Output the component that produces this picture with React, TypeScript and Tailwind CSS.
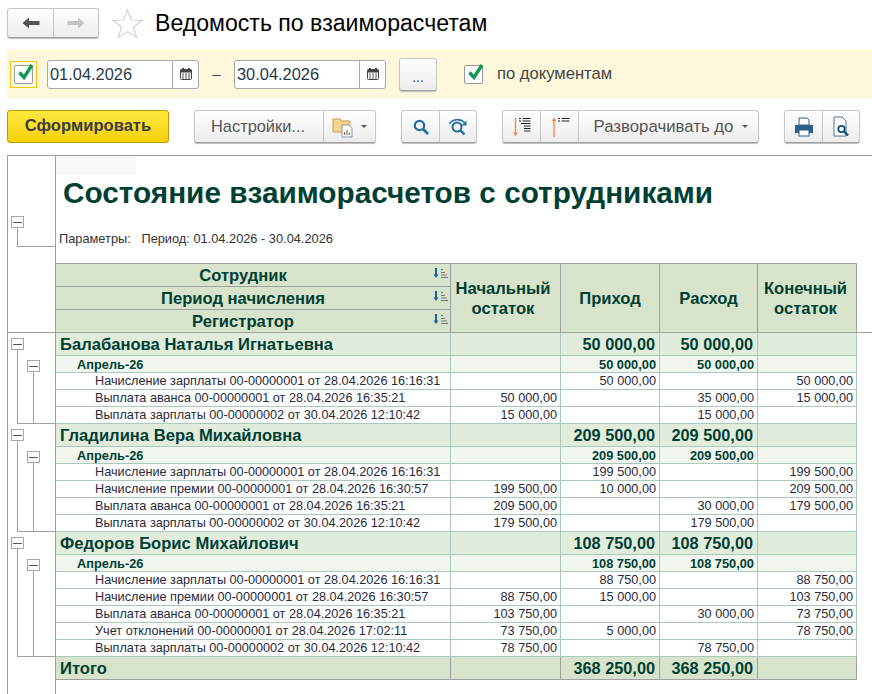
const font = { fontFamily: '"Liberation Sans", Arial, sans-serif' };

type Row = [string, string, string, string, string];
type Group = { name: string; income: string; outcome: string; sub: [string, string]; rows: Row[] };

const groups: Group[] = [
  {
    name: "Балабанова Наталья Игнатьевна",
    income: "50 000,00",
    outcome: "50 000,00",
    sub: ["50 000,00", "50 000,00"],
    rows: [
      ["Начисление зарплаты 00-00000001 от 28.04.2026 16:16:31", "", "50 000,00", "", "50 000,00"],
      ["Выплата аванса 00-00000001 от 28.04.2026 16:35:21", "50 000,00", "", "35 000,00", "15 000,00"],
      ["Выплата зарплаты 00-00000002 от 30.04.2026 12:10:42", "15 000,00", "", "15 000,00", ""],
    ],
  },
  {
    name: "Гладилина Вера Михайловна",
    income: "209 500,00",
    outcome: "209 500,00",
    sub: ["209 500,00", "209 500,00"],
    rows: [
      ["Начисление зарплаты 00-00000001 от 28.04.2026 16:16:31", "", "199 500,00", "", "199 500,00"],
      ["Начисление премии 00-00000001 от 28.04.2026 16:30:57", "199 500,00", "10 000,00", "", "209 500,00"],
      ["Выплата аванса 00-00000001 от 28.04.2026 16:35:21", "209 500,00", "", "30 000,00", "179 500,00"],
      ["Выплата зарплаты 00-00000002 от 30.04.2026 12:10:42", "179 500,00", "", "179 500,00", ""],
    ],
  },
  {
    name: "Федоров Борис Михайлович",
    income: "108 750,00",
    outcome: "108 750,00",
    sub: ["108 750,00", "108 750,00"],
    rows: [
      ["Начисление зарплаты 00-00000001 от 28.04.2026 16:16:31", "", "88 750,00", "", "88 750,00"],
      ["Начисление премии 00-00000001 от 28.04.2026 16:30:57", "88 750,00", "15 000,00", "", "103 750,00"],
      ["Выплата аванса 00-00000001 от 28.04.2026 16:35:21", "103 750,00", "", "30 000,00", "73 750,00"],
      ["Учет отклонений 00-00000001 от 28.04.2026 17:02:11", "73 750,00", "5 000,00", "", "78 750,00"],
      ["Выплата зарплаты 00-00000002 от 30.04.2026 12:10:42", "78 750,00", "", "78 750,00", ""],
    ],
  },
];

const cols = "grid grid-cols-[395px_110px_99px_98px_99px] w-[801px]";

function Calendar() {
  return (
    <svg width="14" height="14" viewBox="0 0 14 14">
      <rect x="1.5" y="2.5" width="11" height="10" rx="1" fill="#fff" stroke="#444" />
      <rect x="1.5" y="2.5" width="11" height="3" fill="#444" />
      <rect x="3" y="1" width="2" height="3" fill="#444" />
      <rect x="9" y="1" width="2" height="3" fill="#444" />
      <path d="M3 7h2M6 7h2M9 7h2M3 9h2M6 9h2M9 9h2M3 11h2M6 11h2M9 11h2" stroke="#555" strokeWidth="1" />
    </svg>
  );
}

function Check({ className }: { className: string }) {
  return (
    <div className={`relative border border-[#9a9a9a] rounded-[2px] bg-white ${className}`}>
      <svg className="absolute left-[1px] top-[-4px]" width="20" height="20" viewBox="0 0 20 20">
        <path d="M3.5 10.5 L8 15.5 L16 3" fill="none" stroke="#0e9a50" strokeWidth="3.4" />
      </svg>
    </div>
  );
}

function DateField({ value }: { value: string }) {
  return (
    <div className="flex w-[152px] h-[29px] rounded-[3px] border border-[#a8a8a8] bg-white">
      <div className="flex-1 pl-[2px] text-[16.4px] leading-[26px] text-[#1f3a4d]">{value}</div>
      <div className="flex w-[26px] items-center justify-center border-l border-[#a8a8a8]">
        <Calendar />
      </div>
    </div>
  );
}

function Btn({ className = "", children }: { className?: string; children: React.ReactNode }) {
  return (
    <div
      className={`flex h-[33px] rounded-[3px] border border-[#c8c8c8] border-b-[#a0a0a0] bg-gradient-to-b from-white to-[#ececec] shadow-[0_1px_1px_#bbb] ${className}`}
    >
      {children}
    </div>
  );
}

function Seg({ className = "", children }: { className?: string; children: React.ReactNode }) {
  return <div className={`flex items-center justify-center border-r border-[#c4c4c4] last:border-r-0 ${className}`}>{children}</div>;
}

function Caret() {
  return <div className="h-0 w-0 border-x-[3px] border-t-[3px] border-x-transparent border-t-[#555]" />;
}

function Loupe({ color = "#1f6ea6" }: { color?: string }) {
  return (
    <svg width="18" height="18" viewBox="0 0 18 18">
      <circle cx="7.5" cy="7.5" r="4.7" fill="none" stroke={color} strokeWidth="2.2" />
      <path d="M11 11 L16 16" stroke={color} strokeWidth="2.6" />
    </svg>
  );
}

function SortIcon() {
  return (
    <svg width="16" height="11" viewBox="0 0 16 11">
      <path d="M3 0v7" stroke="#1a62a0" strokeWidth="2" />
      <path d="M0.5 6.5h5L3 10z" fill="#1a62a0" />
      <path d="M8 1.5h2M8 4.5h4M8 7h6M8 9.5h7" stroke="#777" strokeWidth="1" />
    </svg>
  );
}

function TreeBox({ className }: { className: string }) {
  return (
    <div className={`absolute flex h-[12px] w-[13px] items-center justify-center border border-[#a6a6a6] bg-white ${className}`}>
      <div className="h-[1px] w-[9px] bg-[#555]" />
    </div>
  );
}

function Num({ children, className = "" }: { children?: React.ReactNode; className?: string }) {
  return <div className={`border-r border-[#a9c9bd] pr-[3px] text-right ${className}`}>{children}</div>;
}

function Employee({ g }: { g: Group }) {
  return (
    <div className="flex h-fit">
      <div className="relative w-[48px] shrink-0 border-r border-[#a0a0a0]">
        <TreeBox className="left-[3px] top-[5px]" />
        <TreeBox className="left-[19px] top-[27px]" />
        <div className="absolute left-[9px] top-[17px] bottom-0 w-[1px] bg-[#a0a0a0]" />
        <div className="absolute left-[25px] top-[39px] bottom-0 w-[1px] bg-[#a0a0a0]" />
        <div className="absolute bottom-0 left-[9px] right-0 h-[1px] bg-[#a0a0a0]" />
      </div>
      <div className="w-[801px]">
        <div className={`${cols} h-[23px] border-b border-[#a9c9bd] bg-[#e2ecdd] font-bold leading-[23px] text-[#003f33]`}>
          <div className="border-r border-[#a9c9bd] pl-[4px] text-[16.6px] whitespace-nowrap">{g.name}</div>
          <Num />
          <Num className="pr-[4px] text-[16.3px]">{g.income}</Num>
          <Num className="pr-[4px] text-[16.3px]">{g.outcome}</Num>
          <Num />
        </div>
        <div className={`${cols} h-[17px] border-b border-[#a9c9bd] bg-[#f0f5ee] text-[12.8px] font-bold leading-[17px] text-[#003f33]`}>
          <div className="border-r border-[#a9c9bd] pl-[21px]">Апрель-26</div>
          <Num />
          <Num>{g.sub[0]}</Num>
          <Num>{g.sub[1]}</Num>
          <Num />
        </div>
        {g.rows.map((r) => (
          <div key={r[0]} className={`${cols} h-[17px] border-b border-[#a9c9bd] text-[12.7px] leading-[16px] text-[#2a2a3c]`}>
            <div className="border-r border-[#a9c9bd] pl-[39px] whitespace-nowrap">{r[0]}</div>
            <Num>{r[1]}</Num>
            <Num>{r[2]}</Num>
            <Num>{r[3]}</Num>
            <Num>{r[4]}</Num>
          </div>
        ))}
      </div>
    </div>
  );
}

function HeadCell({ children, className = "" }: { children: React.ReactNode; className?: string }) {
  return (
    <div className={`flex items-center justify-center border-r border-[#a0a0a0] pt-[2px] text-center leading-[20px] ${className}`}>{children}</div>
  );
}

export default function App() {
  return (
    <div style={font} className="flex h-[694px] w-[872px] flex-col overflow-hidden bg-white">
      <div className="ml-[7px] mt-[8px] flex h-[30px] items-center">
        <div className="flex h-[30px] w-[92px] rounded-[3px] border border-[#c8c8c8] border-b-[#a0a0a0] bg-gradient-to-b from-white to-[#ececec] shadow-[0_1px_1px_#bbb]">
          <div className="flex w-[46px] items-center justify-center border-r border-[#c8c8c8]">
            <svg width="20" height="14" viewBox="0 0 20 14">
              <path d="M1.5 7 L8 1.5 V5 H18.5 V9 H8 V12.5 Z" fill="#555" />
            </svg>
          </div>
          <div className="flex flex-1 items-center justify-center">
            <svg width="20" height="14" viewBox="0 0 20 14">
              <path d="M18.5 7 L12 1.5 V5 H1.5 V9 H12 V12.5 Z" fill="#c4c4c4" />
            </svg>
          </div>
        </div>
        <svg className="ml-[13px]" width="31" height="31" viewBox="0 0 31 31">
          <path d="M15.5 2 L19.3 12 L30 12.4 L21.6 19 L24.5 29.5 L15.5 23.6 L6.5 29.5 L9.4 19 L1 12.4 L11.7 12 Z" fill="#fff" stroke="#d2d2d2" strokeWidth="1.2" />
        </svg>
        <div className="ml-[12px] whitespace-nowrap pt-[1px] text-[23.1px] text-black">Ведомость по взаиморасчетам</div>
      </div>

      <div className="ml-[7px] mt-[11px] flex h-[50px] items-center bg-[#fdf8dc]">
        <div className="ml-[3px] flex h-[27px] w-[27px] items-center justify-center border border-[#f5c518]">
          <Check className="h-[19px] w-[19px]" />
        </div>
        <div className="ml-[10px]"><DateField value="01.04.2026" /></div>
        <div className="w-[35px] text-center text-[15px] text-[#444]">–</div>
        <DateField value="30.04.2026" />
        <Btn className="ml-[13px] w-[38px] items-end justify-center pb-[5px] text-[14px] leading-[16px] text-[#444]">...</Btn>
        <Check className="ml-[27px] h-[19px] w-[19px]" />
        <div className="ml-[14px] text-[16.6px] text-[#444]">по документам</div>
      </div>

      <div className="ml-[7px] mt-[11px] flex h-[33px]">
        <div className="flex h-[33px] w-[162px] items-center justify-center rounded-[3px] border border-[#c09a00] bg-gradient-to-b from-[#ffe83c] to-[#f5d000] text-[16.6px] font-bold text-[#3c3c3c]">
          Сформировать
        </div>
        <Btn className="ml-[25px] w-[182px]">
          <Seg className="w-[129px] pr-[2px] text-[16.4px] text-[#555]">Настройки...</Seg>
          <Seg className="flex-1 gap-[7px]">
            <svg width="22" height="22" viewBox="0 0 22 22">
              <path d="M1 3h7l1.5 2H18v11H1z" fill="#f6d48a" stroke="#c9a050" />
              <path d="M10 9h7l3 3v9H10z" fill="#fff" stroke="#8a97a5" />
              <path d="M12.5 19v-3" stroke="#d0483c" strokeWidth="1.3" />
              <path d="M15 19v-5" stroke="#4aa04a" strokeWidth="1.3" />
              <path d="M17.5 19v-2" stroke="#3a78b8" strokeWidth="1.3" />
            </svg>
            <Caret />
          </Seg>
        </Btn>
        <Btn className="ml-[25px] w-[76px]">
          <Seg className="w-[38px]"><Loupe /></Seg>
          <Seg className="flex-1">
            <svg width="20" height="18" viewBox="0 0 20 18">
              <circle cx="9" cy="9" r="4.5" fill="none" stroke="#1f6ea6" strokeWidth="2" />
              <path d="M12.5 12.5 L16.5 16.5" stroke="#1f6ea6" strokeWidth="2.4" />
              <path d="M1.5 6 C4 1 12 0 16.5 4.5" fill="none" stroke="#1f6ea6" strokeWidth="1.6" />
              <path d="M18.5 2.5v5h-5z" fill="#1f6ea6" />
            </svg>
          </Seg>
        </Btn>
        <Btn className="ml-[25px] w-[257px]">
          <Seg className="w-[38px]">
            <svg width="20" height="20" viewBox="0 0 20 20">
              <path d="M3.5 1v15" stroke="#ef8a50" strokeWidth="1.4" />
              <path d="M1.2 15.5h4.6L3.5 19.5z" fill="#ef8a50" />
              <path d="M7 1.5h2M10.5 1.5h8M7 4h2M10.5 4h8M9 6.5h9.5M12 9h6.5M12 11.5h6.5M12 14h6.5" stroke="#222" strokeWidth="1" />
            </svg>
          </Seg>
          <Seg className="w-[38px]">
            <svg width="20" height="20" viewBox="0 0 20 20">
              <path d="M4 20V3" stroke="#ef8a50" strokeWidth="1.4" />
              <path d="M1.7 4h4.6L4 0.5z" fill="#ef8a50" />
              <path d="M8 1.5h2M11.5 1.5h8M8 4h2M11.5 4h8" stroke="#222" strokeWidth="1" />
            </svg>
          </Seg>
          <Seg className="flex-1 gap-[9px] pl-[5px] text-[16.8px] text-[#555]">
            Разворачивать до
            <Caret />
          </Seg>
        </Btn>
        <Btn className="ml-[25px] w-[76px]">
          <Seg className="w-[38px]">
            <svg width="20" height="20" viewBox="0 0 20 20">
              <path d="M5 1h8l2 2v5H5z" fill="#fff" stroke="#2f6088" />
              <path d="M1 8h18v8H1z" fill="#2f6088" />
              <rect x="5" y="13" width="10" height="6" fill="#fff" stroke="#2f6088" />
            </svg>
          </Seg>
          <Seg className="flex-1">
            <svg width="20" height="22" viewBox="0 0 20 22">
              <path d="M3 1h8l4 4v15H3z" fill="#fff" stroke="#4f7896" />
              <circle cx="10.5" cy="13" r="3.2" fill="none" stroke="#10507e" strokeWidth="1.8" />
              <path d="M13 15.5 L17 19.5" stroke="#10507e" strokeWidth="2.4" />
            </svg>
          </Seg>
        </Btn>
      </div>

      <div className="ml-[7px] mt-[12px] flex w-[865px] flex-1 flex-col border-l border-t border-[#a0a0a0]">
        <div className="flex border-b border-[#a0a0a0]">
          <div className="relative h-[176px] w-[48px] shrink-0 border-r border-[#a0a0a0]">
            <TreeBox className="left-[3px] top-[60px]" />
            <div className="absolute left-[9px] top-[72px] h-[18px] w-[1px] bg-[#a0a0a0]" />
            <div className="absolute left-[9px] top-[90px] h-[1px] w-[38px] bg-[#a0a0a0]" />
          </div>
          <div className="flex w-[801px] flex-col">
            <div className="h-[18px] w-[80px] bg-[#f8f8f8]" />
            <div className="ml-[7px] mt-[1px] whitespace-nowrap text-[29.75px] font-bold leading-[36px] text-[#003f33]">
              Состояние взаиморасчетов с сотрудниками
            </div>
            <div className="ml-[3px] mt-[20px] whitespace-pre text-[12.8px] leading-[16px] text-[#333]">Параметры:   Период: 01.04.2026 - 30.04.2026</div>
            <div className={`${cols} mt-[16px] h-[69px] flex-none border-t border-[#a0a0a0] bg-[#d8e3cb] text-[16.6px] font-bold text-[#003f33]`}>
              <div className="grid grid-rows-[23px_23px_22px] border-r border-[#a0a0a0]">
                {["Сотрудник", "Период начисления", "Регистратор"].map((t) => (
                  <div key={t} className="relative flex items-center justify-center border-b border-[#a0a0a0] pr-[20px] pt-[2px] leading-[20px] last:border-b-0">
                    {t}
                    <div className="absolute right-[1px] top-[4px]"><SortIcon /></div>
                  </div>
                ))}
              </div>
              <HeadCell className="pr-[5px]">Начальный<br />остаток</HeadCell>
              <HeadCell>Приход</HeadCell>
              <HeadCell>Расход</HeadCell>
              <HeadCell className="pr-[3px]">Конечный<br />остаток</HeadCell>
            </div>
          </div>
        </div>

        {groups.map((g) => (
          <Employee key={g.name} g={g} />
        ))}

        <div className="flex flex-1">
          <div className="w-[48px] shrink-0 border-r border-[#a0a0a0]" />
          <div className={`${cols} h-[23px] border-b border-[#a0a0a0] bg-[#d8e3cb] font-bold leading-[23px] text-[#003f33]`}>
            <div className="border-r border-[#a0a0a0] pl-[4px] text-[16.6px]">Итого</div>
            <div className="border-r border-[#a0a0a0]" />
            <div className="border-r border-[#a0a0a0] pr-[4px] text-right text-[16.3px]">368 250,00</div>
            <div className="border-r border-[#a0a0a0] pr-[4px] text-right text-[16.3px]">368 250,00</div>
            <div className="border-r border-[#a0a0a0]" />
          </div>
        </div>
      </div>
    </div>
  );
}
